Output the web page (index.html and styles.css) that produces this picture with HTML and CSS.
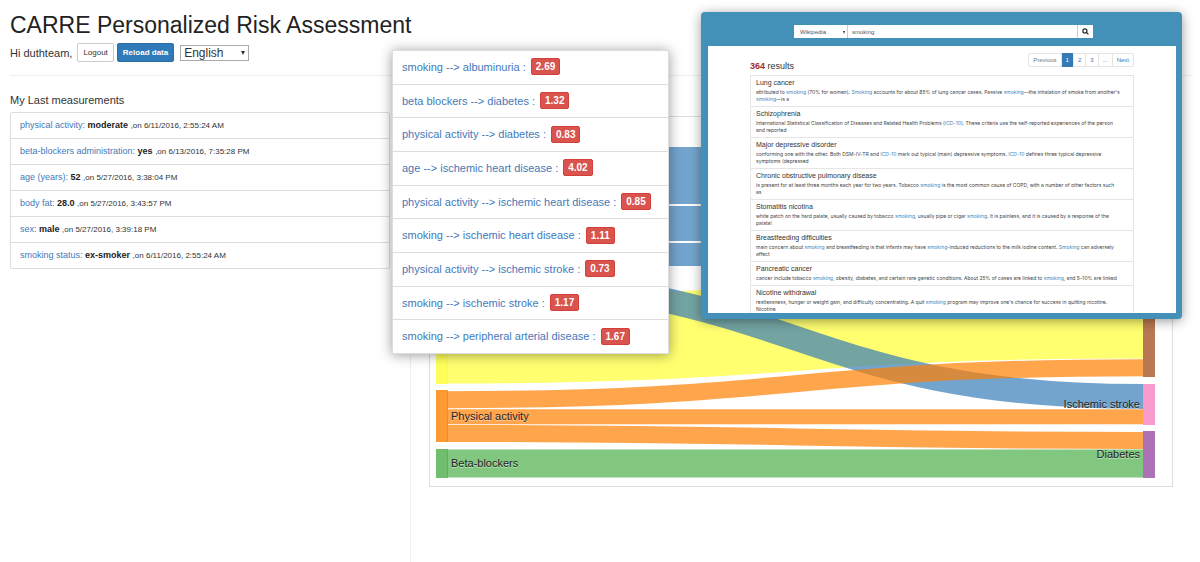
FILE: index.html
```
<!DOCTYPE html>
<html lang="en">
<head>
<meta charset="utf-8">
<title>CARRE Personalized Risk Assessment</title>
<link rel="stylesheet" href="styles.css">
</head>
<body>
<div class="page">
  <header class="header">
    <h1 class="title">CARRE Personalized Risk Assessment</h1>
    <div class="toolbar">
      <span class="greeting">Hi duthteam,</span>
      <button class="btn" type="button">Logout</button>
      <button class="btn btn-primary" type="button">Reload data</button>
      <span class="pick">
        <select class="language" aria-label="Language"><option>English</option></select>
      </span>
    </div>
  </header>
  <main class="columns">
    <section class="measurements">
      <h2 class="subtitle">My Last measurements</h2>
      <ul class="measure-list">
        <li><a href="#">physical activity:</a> <b>moderate</b> <small>,on 6/11/2016, 2:55:24 AM</small></li>
        <li><a href="#">beta-blockers administration:</a> <b>yes</b> <small>,on 6/13/2016, 7:35:28 PM</small></li>
        <li><a href="#">age (years):</a> <b>52</b> <small>,on 5/27/2016, 3:38:04 PM</small></li>
        <li><a href="#">body fat:</a> <b>28.0</b> <small>,on 5/27/2016, 3:43:57 PM</small></li>
        <li><a href="#">sex:</a> <b>male</b> <small>,on 5/27/2016, 3:39:18 PM</small></li>
        <li><a href="#">smoking status:</a> <b>ex-smoker</b> <small>,on 6/11/2016, 2:55:24 AM</small></li>
      </ul>
    </section>
    <section class="diagram">
      <div class="chart">
        <svg class="sankey" viewBox="430 117 742 369" role="img" aria-label="Risk factors and diseases">
          <g class="links">
            <path class="yellow" stroke-width="87" d="M447 340C795 340 795 315 1143 315"/>
            <path class="blue" stroke-width="57" d="M447 175.500H1143"/>
            <path class="blue" stroke-width="35" d="M447 223.500H1143"/>
            <path class="blue" stroke-width="23" d="M447 254.500H1143"/>
            <path class="blue" stroke-width="25" d="M447 279.500C795 279.500 795 396.500 1143 396.500"/>
            <path class="orange" stroke-width="17" d="M447 399.700C795 399.700 795 367.700 1143 367.700"/>
            <path class="orange" stroke-width="15" d="M447 416.700H1143"/>
            <path class="orange" stroke-width="17" d="M447 433.500C795 433.500 795 440.400 1143 440.400"/>
            <path class="green" stroke-width="28" d="M447 463.500H1143"/>
          </g>
          <g class="nodes">
            <rect class="blue" x="436" y="147" width="12" height="145"/>
            <rect class="yellow" x="436" y="297" width="12" height="87"/>
            <rect class="orange" x="436" y="390" width="12" height="52"/>
            <rect class="green" x="436" y="449" width="12" height="29"/>
            <rect class="brown" x="1143" y="272" width="12" height="105"/>
            <rect class="pink" x="1143" y="384" width="12" height="41"/>
            <rect class="purple" x="1143" y="431" width="12" height="47"/>
          </g>
          <g class="labels">
            <text x="451" y="420">Physical activity</text>
            <text x="451" y="467">Beta-blockers</text>
            <text class="end" x="1140" y="408">Ischemic stroke</text>
            <text class="end" x="1140" y="458">Diabetes</text>
          </g>
        </svg>
      </div>
    </section>
  </main>

  <ul class="risks">
    <li><a href="#">smoking --&gt; albuminuria :</a><span class="badge">2.69</span></li>
    <li><a href="#">beta blockers --&gt; diabetes :</a><span class="badge">1.32</span></li>
    <li><a href="#">physical activity --&gt; diabetes :</a><span class="badge">0.83</span></li>
    <li><a href="#">age --&gt; ischemic heart disease :</a><span class="badge">4.02</span></li>
    <li><a href="#">physical activity --&gt; ischemic heart disease :</a><span class="badge">0.85</span></li>
    <li><a href="#">smoking --&gt; ischemic heart disease :</a><span class="badge">1.11</span></li>
    <li><a href="#">physical activity --&gt; ischemic stroke :</a><span class="badge">0.73</span></li>
    <li><a href="#">smoking --&gt; ischemic stroke :</a><span class="badge">1.17</span></li>
    <li><a href="#">smoking --&gt; peripheral arterial disease :</a><span class="badge">1.67</span></li>
  </ul>

  <section class="dialog" aria-label="Search">
    <form class="search">
      <span class="pick source-pick"><select class="source" aria-label="Source"><option>Wikipedia</option></select></span>
      <input class="query" type="text" value="smoking" aria-label="Search text">
      <button class="go" type="button" aria-label="Search">
        <svg class="glass" viewBox="0 0 12 12"><circle cx="5" cy="5" r="3.500"/><path d="M7.500 7.500L11 11"/></svg>
      </button>
    </form>
    <div class="dialog-body">
      <div class="results-head">
        <h2 class="count"><b>364</b> results</h2>
        <nav class="pager" aria-label="Pages">
          <a href="#">Previous</a><a class="current" href="#">1</a><a href="#">2</a><a href="#">3</a><a href="#">...</a><a href="#">Next</a>
        </nav>
      </div>
      <div class="results">
        <article><h3>Lung cancer</h3><p>attributed to <a href="#">smoking</a> (70% for women). <a href="#">Smoking</a> accounts for about 85% of lung cancer cases. Passive <a href="#">smoking</a>—the inhalation of smoke from another's<br><a href="#">smoking</a>—is a</p></article>
        <article><h3>Schizophrenia</h3><p>International Statistical Classification of Diseases and Related Health Problems (<a href="#">ICD-10</a>). These criteria use the self-reported experiences of the person<br>and reported</p></article>
        <article><h3>Major depressive disorder</h3><p>conforming one with the other. Both DSM-IV-TR and <a href="#">ICD-10</a> mark out typical (main) depressive symptoms. <a href="#">ICD-10</a> defines three typical depressive<br>symptoms (depressed</p></article>
        <article><h3>Chronic obstructive pulmonary disease</h3><p>is present for at least three months each year for two years. Tobacco <a href="#">smoking</a> is the most common cause of COPD, with a number of other factors such<br>as</p></article>
        <article><h3>Stomatitis nicotina</h3><p>white patch on the hard palate, usually caused by tobacco <a href="#">smoking</a>, usually pipe or cigar <a href="#">smoking</a>. It is painless, and it is caused by a response of the<br>palatal</p></article>
        <article><h3>Breastfeeding difficulties</h3><p>main concern about <a href="#">smoking</a> and breastfeeding is that infants may have <a href="#">smoking</a>-induced reductions to the milk iodine content. <a href="#">Smoking</a> can adversely<br>affect</p></article>
        <article><h3>Pancreatic cancer</h3><p>cancer include tobacco <a href="#">smoking</a>, obesity, diabetes, and certain rare genetic conditions. About 25% of cases are linked to <a href="#">smoking</a>, and 5–10% are linked</p></article>
        <article><h3>Nicotine withdrawal</h3><p>restlessness, hunger or weight gain, and difficulty concentrating. A quit <a href="#">smoking</a> program may improve one's chance for success in quitting nicotine.<br>Nicotine</p></article>
      </div>
    </div>
  </section>
</div>
</body>
</html>
```
FILE: styles.css
```
* { box-sizing: border-box; }
body {
  margin: 0;
  background: #fff;
  color: #333;
  font-family: "Liberation Sans", Arial, sans-serif;
  font-size: 12px;
}
a { color: #4479b8; text-decoration: none; }
h1, h2, h3, p, ul { margin: 0; padding: 0; font-weight: 400; }
ul { list-style: none; }
button, select, input { font-family: inherit; color: inherit; margin: 0; }

.page {
  position: relative;
  min-height: 100vh;
  display: flex;
  flex-direction: column;
  overflow: hidden;
}
.header {
  margin: 0 8px 0 10px;
  padding: 10px 0 13px;
  border-bottom: 1px solid #eee;
}
.title { font-size: 23px; line-height: 30px; color: #222; }
.toolbar { display: flex; align-items: center; gap: 3px; padding-top: 3px; }
.greeting { font-size: 11px; margin-right: 2px; }
.btn {
  height: 19px;
  padding: 0 5px;
  border: 1px solid #ccc;
  border-radius: 2px;
  background: #fff;
  font-size: 8px;
}
.btn-primary { background: #2f7ab9; border-color: #2e6da4; color: #fff; font-weight: 700; }
.pick { position: relative; display: flex; }
.pick::after {
  content: "";
  position: absolute;
  right: 4px;
  top: 50%;
  margin-top: -2px;
  border: 2px solid transparent;
  border-top: 4px solid #333;
  border-bottom: 0;
}
.language {
  appearance: none;
  width: 69px;
  height: 16px;
  margin-left: 3px;
  padding: 0 3px;
  border: 1px solid #aaa;
  border-radius: 0;
  background: #fff;
  font-size: 12px;
  line-height: 14px;
}

.columns { flex: 1; display: flex; }
.measurements {
  width: 411px;
  flex: none;
  margin-top: 8px;
  padding: 8px 20px 0 10px;
  border-right: 1px solid #eee;
}
.subtitle { font-size: 11px; line-height: 16px; }
.measure-list {
  margin-top: 4px;
  border: 1px solid #ddd;
  border-radius: 2px;
}
.measure-list li {
  height: 26px;
  padding: 0 9px;
  line-height: 25px;
  font-size: 9px;
  border-bottom: 1px solid #ddd;
}
.measure-list li:last-child { border-bottom: 0; height: 25px; }
.measure-list b { color: #222; }
.measure-list small { font-size: 8px; }

.diagram { flex: 1; min-width: 0; padding: 40px 27px 0 18px; }
.chart { border: 1px solid #ddd; }
.sankey { display: block; width: 100%; }
.links path { fill: none; opacity: .7; }
.nodes rect { opacity: .8; }
.links .blue { stroke: #377eb8; }
.links .yellow { stroke: #ffff33; }
.links .orange { stroke: #ff7f00; }
.links .green { stroke: #4daf4a; }
.nodes .blue { fill: #377eb8; }
.nodes .yellow { fill: #ffff33; }
.nodes .orange { fill: #ff7f00; }
.nodes .green { fill: #4daf4a; }
.nodes .brown { fill: #a65628; }
.nodes .pink { fill: #f781bf; }
.nodes .purple { fill: #984ea3; }
.labels text { font-size: 11px; fill: #222; text-shadow: 0 1px 0 rgba(255, 255, 255, .5); }
.labels .end { text-anchor: end; }

.risks {
  position: absolute;
  left: 392px;
  top: 50px;
  width: 277px;
  height: 304px;
  display: flex;
  flex-direction: column;
  background: #fff;
  border: 1px solid #ddd;
  box-shadow: 0 1px 12px rgba(0, 0, 0, .4);
}
.risks li {
  flex: 1;
  display: flex;
  align-items: center;
  gap: 5px;
  padding: 0 9px 1px;
  font-size: 11px;
  border-bottom: 1px solid #ddd;
}
.risks li:last-child { border-bottom: 0; }
.badge {
  padding: 0 4px;
  border: 1px solid #d43f3a;
  border-radius: 2px;
  background: #d9534f;
  color: #fff;
  font-size: 10px;
  font-weight: 700;
  line-height: 15px;
}

.dialog {
  position: absolute;
  right: 18px;
  top: 12px;
  width: 481px;
  height: 307px;
  display: flex;
  flex-direction: column;
  padding: 13px 6px 6px 7px;
  background: #4391b9;
  border-radius: 4px;
  box-shadow: 0 2px 12px rgba(0, 0, 0, .4);
}
.search { display: flex; height: 13px; margin: 0 83px 8px 86px; background: #fff; }
.source {
  appearance: none;
  width: 54px;
  padding: 0 6px;
  border: 0;
  border-right: 1px solid #ccc;
  background: #fff;
  font-size: 6px;
  color: #555;
}
.source-pick::after { right: 3px; margin-top: -1px; border-width: 3px 1px 0; }
.query {
  flex: 1;
  min-width: 0;
  padding: 0 4px;
  border: 0;
  background: #fff;
  font-size: 6px;
  color: #555;
}
.go {
  width: 16px;
  padding: 0;
  border: 0;
  border-left: 1px solid #ccc;
  background: #fff;
  display: flex;
  align-items: center;
  justify-content: center;
}
.glass { width: 7px; height: 7px; fill: none; stroke: #222; stroke-width: 2; }
.dialog-body { flex: 1; min-height: 0; overflow: hidden; padding: 7px 42px 0; background: #fff; }
.results-head { display: flex; justify-content: space-between; height: 22px; }
.count { align-self: flex-end; font-size: 9px; line-height: 18px; }
.count b { color: #a82a2a; }
.pager {
  display: flex;
  align-self: flex-start;
  height: 14px;
  border: 1px solid #e5e5e5;
  border-radius: 2px;
}
.pager a { padding: 0 4px; font-size: 6px; line-height: 12px; border-right: 1px solid #e5e5e5; color: #337ab7; }
.pager a:first-child { color: #777; }
.pager a:last-child { border-right: 0; }
.pager .current { margin: -1px 0; line-height: 14px; background: #337ab7; color: #fff; }
.results { border: 1px solid #e5e5e5; border-top: 0; }
.results article { padding: 2px 5px 3px; border-top: 1px solid #e5e5e5; }
.results h3 { font-size: 7px; line-height: 10px; margin-bottom: 1px; }
.results p { font-family: Inter, "Liberation Sans", sans-serif; font-size: 5px; line-height: 7px; color: #444; white-space: nowrap; }
.results p a { color: #3a87bd; }
```
